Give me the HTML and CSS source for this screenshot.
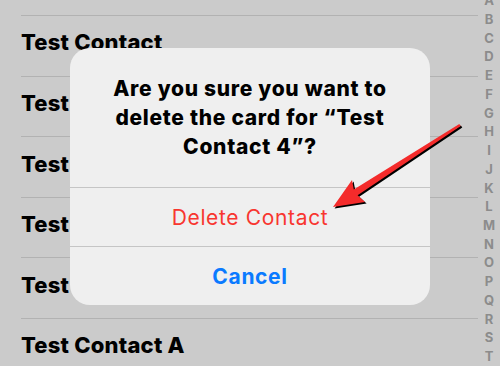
FILE: index.html
```html
<!DOCTYPE html>
<html>
<head>
<meta charset="utf-8">
<link rel="stylesheet" href="styles.css">
</head>
<body>
<div class="page">
  <div class="list">
    <div class="row">Test Contact</div>
    <div class="row">Test Contact 2</div>
    <div class="row">Test Contact 3</div>
    <div class="row">Test Contact 4</div>
    <div class="row">Test Contact 5</div>
    <div class="row">Test Contact A</div>
  </div>
  <div class="index">
    <span>A</span><span>B</span><span>C</span><span>D</span><span>E</span><span>F</span><span>G</span><span>H</span><span>I</span><span>J</span><span>K</span><span>L</span><span>M</span><span>N</span><span>O</span><span>P</span><span>Q</span><span>R</span><span>S</span><span>T</span>
  </div>
</div>
<div class="alert">
  <div class="alert-title">Are you sure you want to delete the card for “Test Contact 4”?</div>
  <div class="alert-btn danger">Delete Contact</div>
  <div class="alert-btn cancel">Cancel</div>
</div>
<svg class="arrow" width="500" height="366" viewBox="0 0 500 366">
  <g transform="translate(1.6,1.6)">
    <polygon fill="#000" points="459.3,124 353.8,189.4 352,180 333,207 365,202 357.6,195.2 460.7,126"/>
  </g>
  <polygon fill="#f42b2b" points="459.3,124 353.8,189.4 352,180 333,207 365,202 357.6,195.2 460.7,126"/>
</svg>
</body>
</html>
```
FILE: styles.css
```css
html, body {
  margin: 0;
  padding: 0;
}
body {
  width: 500px;
  height: 366px;
  overflow: hidden;
  background: #cbcbcb;
  font-family: Inter, "Liberation Sans", sans-serif;
  position: relative;
}
.page {
  display: flex;
  height: 366px;
}
.list {
  flex: 1;
  margin-left: 21px;
  padding-top: 15px;
}
.row {
  box-sizing: border-box;
  height: 60.6px;
  border-top: 1px solid #b2b2b2;
  padding-top: 13.4px;
  font-size: 22px;
  line-height: 26px;
  font-weight: 800;
  letter-spacing: 0.2px;
  color: #000;
  white-space: nowrap;
}
.index {
  width: 22px;
  display: flex;
  flex-direction: column;
  align-items: center;
  margin-top: -8.8px;
  font-size: 13px;
  font-weight: 700;
  color: #8c8c8c;
}
.index span {
  height: 18.74px;
  line-height: 18.74px;
  flex: none;
}
.alert {
  position: absolute;
  left: 70px;
  top: 48px;
  width: 360px;
  height: 257px;
  background: #efefef;
  border-radius: 20px;
  display: flex;
  flex-direction: column;
}
.alert-title {
  padding: 26px 20px 26px;
  height: 139px;
  box-sizing: border-box;
  text-align: center;
  font-size: 21px;
  line-height: 29px;
  font-weight: 800;
  letter-spacing: 0.7px;
  color: #000;
}
.alert-btn {
  height: 59px;
  border-top: 1px solid #c5c5c5;
  box-sizing: border-box;
  display: flex;
  align-items: center;
  justify-content: center;
  font-size: 21px;
  letter-spacing: 0.65px;
}
.danger {
  color: #f8362f;
}
.cancel {
  color: #0a7aff;
  font-weight: 700;
}
.arrow {
  position: absolute;
  left: 0;
  top: 0;
}
```
